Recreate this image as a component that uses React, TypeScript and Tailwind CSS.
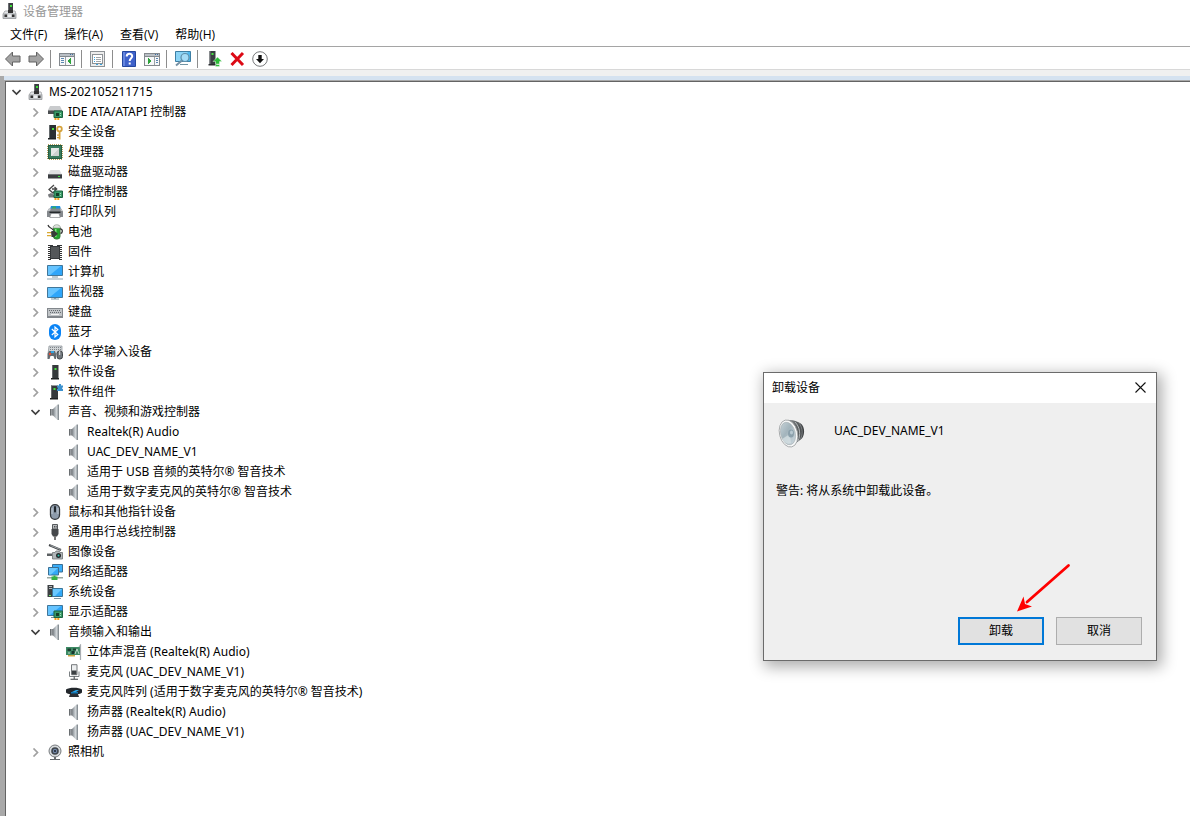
import { useState } from 'react';
import type { ReactElement, ReactNode } from 'react';

function Icon({ children, size = 16, crisp = false }: { children: ReactNode; size?: number; crisp?: boolean }) {
  return (
    <svg width={size} height={size} viewBox={`0 0 ${size} ${size}`} shapeRendering={crisp ? 'crispEdges' : 'auto'} fill="none" aria-hidden="true" className="shrink-0">
      {children}
    </svg>
  );
}

const Pc = (
  <Icon>
    <path d="M6 0h5v9H6z" fill="#3c3f42" />
    <path d="M6 0h1v9H6z" fill="#6a6d70" />
    <path d="M8 2h2v2H8z" fill="#3ee03a" />
    <path d="M3 8h10l1 3v4.500H1V11z" fill="#c3c6c9" stroke="#8b8e91" strokeWidth=".7" />
    <path d="M3 8.500h3V10H2.300zM11 8.500h2l.5 1.500H11z" fill="#e4e6e8" />
    <path d="M6 7h5v3H6z" fill="#333" />
    <path d="M2.500 11.500H5V14H2.500zM10 11.500h2.500V14H10z" fill="#333" />
    <path d="M6 11.500h3V14H6z" fill="#eef0f1" />
  </Icon>
);

const Card = (
  <>
    <path d="M7 7h8.500v6.500H7z" fill="#3a9a68" stroke="#1c6340" />
    <path d="M9 9h3v3H9z" fill="#16402a" />
    <path d="M13 9h1v1h-1zM13 11h1v1h-1z" fill="#9fe0b6" />
    <path d="M7.500 14H9.500v2h-2zM10.300 14h2v2h-2z" fill="#f2a21c" />
  </>
);

const Ide = (
  <Icon>
    <path d="M3 2h10l2 4H1z" fill="#c9cbcd" />
    <path d="M1 6h14v4H1z" fill="#4b4e51" />
    <path d="M1 6h14v1H1z" fill="#87898c" />
    {Card}
  </Icon>
);

const Security = (
  <Icon>
    <path d="M2 1h7v13.500H2z" fill="#2c3033" />
    <path d="M2 1h1v13.500H2z" fill="#63686b" />
    <path d="M5 4h2v2H5z" fill="#43e33c" />
    <path d="M1 14h8v1.500H1z" fill="#202325" />
    <circle cx="12.500" cy="5" r="2.300" stroke="#d5a23b" strokeWidth="1.800" />
    <path d="M11.700 7.500h1.800v8h-1.800zM10 10.500h2v1.200h-2zM10 13h2v1.200h-2z" fill="#d5a23b" />
  </Icon>
);

const Cpu = (
  <Icon crisp>
    <rect x="1" y="1" width="14" height="14" stroke="#b8a05a" strokeWidth="2" strokeDasharray="1 1" />
    <path d="M1 1h14v14H1z" fill="#245c43" />
    <path d="M2 2h12v12H2z" fill="#387a5c" />
    <path d="M4 4h8v8H4z" fill="#cdd2cf" />
    <path d="M4 12V4h8z" fill="#e4e7e5" />
  </Icon>
);

const Disk = (
  <Icon>
    <path d="M3.500 6h9l2.500 4.500H1z" fill="#dfe0e2" />
    <path d="M1 10.500h14v4H1z" fill="#3a3d40" />
    <path d="M1 10h14v1H1z" fill="#707376" />
    <path d="M11 12h2v1h-2z" fill="#3fe343" />
  </Icon>
);

const Storage = (
  <Icon>
    <path d="M7 1 2 5.500 6 9l1.500-1.500M5 5h4.500M7.500 3l2.200 2-2.200 2" stroke="#484848" strokeWidth="1.300" />
    <path d="M1 10.500 4 9l3 2H1zM1 11h6v2.500H2z" fill="#77797c" />
    {Card}
  </Icon>
);

const Printer = (
  <Icon>
    <path d="M4 2h9l1 3H3z" fill="#1b8fe0" />
    <path d="M5.500 2.500H9V5H5z" fill="#34ad61" />
    <path d="M2 4.500h12l2 3V13h-3l-1-3H4l-1 3H0V7.500z" fill="#85898d" />
    <path d="M2 4.500h2L3 7H.5zM14 4.500h-1L14 7h1.500z" fill="#c0c4c7" />
    <path d="M2.500 7.500h11V9h-11z" fill="#24282b" />
    <path d="M4 9.500h8l1.200 4H2.800z" fill="#fafafa" stroke="#73777a" strokeWidth=".6" />
  </Icon>
);

const Battery = (
  <Icon>
    <rect x="6.500" y="1.500" width="6.500" height="13.500" rx="2.500" fill="#24a52c" stroke="#387c39" />
    <path d="M6 4c0-4.500 7.500-4.500 7.500 0z" fill="#dbe1db" stroke="#8c948c" strokeWidth=".6" />
    <path d="M8 5h1.500v8H8z" fill="#85e283" />
    <path d="M13 5c3-.5 3 4 .5 4.500" stroke="#333" strokeWidth="1.300" />
    <path d="M1 1c1 4 4 2 5 5" stroke="#333" strokeWidth="1.200" />
    <path d="M4 7.500 7 6.500l4 3.300-3.500 3.200H4.500z" fill="#383d38" />
    <path d="M0 8h4v1.300H0zM0 11h4v1.300H0z" fill="#d9a831" />
  </Icon>
);

const Firmware = (
  <Icon crisp>
    <path d="M2.500 1v15M13.500 1v15" stroke="#333" strokeWidth="3" strokeDasharray="1 1" />
    <path d="M3 1h3v1h4V1h3v14H3z" fill="#35383b" />
    <path d="M4 3h8v11H4z" fill="#54575a" />
  </Icon>
);

const Screen = (
  <>
    <path d="M.5 1.500h15v10H.5z" fill="#2ea6fa" stroke="#41779a" />
    <path d="M1 2h13L3 11H1z" fill="#66c4ff" />
  </>
);
const Computer = (
  <Icon>
    {Screen}
    <path d="M5 12.500h6v1H5z" fill="#7b98a5" />
    <path d="M0 14.500h16v1H0z" fill="#8ba5b3" />
  </Icon>
);
const Monitor = (
  <Icon>
    <g transform="translate(0 2)">{Screen}</g>
    <path d="M7 14h2v1H7zM4 14.500h8v1H4z" fill="#829daa" />
  </Icon>
);
const Keyboard = (
  <Icon crisp>
    <path d="M0 4h16v10H0z" fill="#82878c" />
    <path d="M1 5h14v7H1z" fill="#c0c4c7" />
    <path d="M2 6.500h12M3 8.500h11" stroke="#666b70" strokeDasharray="1 1" />
    <path d="M4 10.500h8" stroke="#f4f4f4" />
  </Icon>
);
const Bluetooth = (
  <Icon>
    <rect x="2" y="0" width="12" height="16" rx="6" fill="#0a84f5" />
    <path d="m4.800 5 6 5.500L8 13V3l2.800 2.500L4.800 11" stroke="#fff" strokeWidth="1.200" />
  </Icon>
);
const Hid = (
  <Icon>
    <path d="M2 2h13v8H1z" fill="#d0d4d7" stroke="#8a9095" strokeWidth=".7" />
    <path d="M3 3.500h11M3 5.500h11" stroke="#7f8488" strokeDasharray="1 1" />
    <path d="M2 7h6l1 3v5H7.500l-1-3H3.500l-1 3H.5V10z" fill="#646b70" />
    <path d="M2 9h2v2H2z" fill="#e64b37" />
    <path d="M4 7h3v2H4z" fill="#35a1de" />
    <rect x="10" y="7" width="5.500" height="8" rx="2.500" fill="#71777c" stroke="#404549" />
    <path d="M12.700 7v4" stroke="#e1e4e6" />
  </Icon>
);
const Software = (
  <Icon>
    <path d="M5 1h6.500v14H5z" fill="#35393c" />
    <path d="M5 1h1v14H5z" fill="#65696c" />
    <path d="M7.500 4h2v2h-2z" fill="#48e33f" />
    <path d="M4 14h8v1.500H4z" fill="#1f2224" />
  </Icon>
);
const Component = (
  <Icon>
    <path d="M4 1.500h7v13H4z" fill="#35393c" />
    <path d="M4 1.500h1v13H4z" fill="#65696c" />
    <path d="M6.500 4h2v2h-2z" fill="#48e33f" />
    <path d="M3 14h8v1.500H3z" fill="#1f2224" />
    <path d="M10 1.500h2V0h2v1.500h2v2h-.8V5H16v2h-6V5h.8V3.500H10z" fill="#3c91ce" />
  </Icon>
);
const Speaker = (
  <Icon>
    <defs>
      <linearGradient id="cone">
        <stop stopColor="#6d7276" />
        <stop offset=".35" stopColor="#a9afb4" />
        <stop offset=".65" stopColor="#d3d8db" />
        <stop offset="1" stopColor="#737b81" />
      </linearGradient>
    </defs>
    <path d="M3 5h3v6.500H3z" fill="#9a9ea2" />
    <path d="M3 5h1v6.500H3z" fill="#6a6e71" />
    <path d="M5.500 5.500 10.500.5H12v15.500h-1.500l-5-5z" fill="url(#cone)" />
  </Icon>
);
const Mouse = (
  <Icon>
    <rect x="3.500" y=".7" width="9" height="14.600" rx="4.300" fill="#8d9bab" stroke="#34383c" strokeWidth="1.300" />
    <path d="M5 4v6M11 4v6" stroke="#c2ccd5" />
    <rect x="7" y="2" width="2" height="6.500" rx="1" fill="#20262c" />
  </Icon>
);
const Usb = (
  <Icon>
    <path d="M5.500.5h5V5h-5z" fill="#b9bdc0" stroke="#575a5d" />
    <path d="M7 2h.8v1.500H7zM8.700 2h.8v1.500h-.8z" fill="#333" />
    <path d="M4.500 5h7v5l-1.500 2.500H6L4.500 10z" fill="#45484b" />
    <path d="M7 12h2v4H7z" fill="#777" />
  </Icon>
);
const Imaging = (
  <Icon>
    <path d="m2 1 12 5" stroke="#3f4346" strokeWidth="2" />
    <path d="m3.500 1.500 10 4" stroke="#b7bdc0" strokeWidth=".8" />
    <path d="M0 9.500h5v2.500H0z" fill="#5c6063" />
    <path d="M5.500 8.500H8l1-1.500h3l1 1.500h2.500v6.500h-10z" fill="#b0b5b8" stroke="#6c7174" strokeWidth=".8" />
    <circle cx="11.500" cy="11.500" r="2.500" fill="#24292c" />
    <circle cx="11.500" cy="11.500" r="1" fill="#2fc5b0" />
  </Icon>
);
const Network = (
  <Icon>
    <path d="M5.500.5h10v7.500h-10z" fill="#3aaefa" stroke="#3a6f94" />
    <path d="M1.500 3.500h10v7.500h-10z" fill="#32a9f8" stroke="#3a6f94" />
    <path d="M2 4h9l-7 6.500H2z" fill="#6ac8ff" />
    <path d="M0 13h16v1.500H0z" fill="#9ba8a0" />
    <path d="M6.500 11.500h2v1h2V16h-6v-3.500h2z" fill="#36b046" />
  </Icon>
);
const System = (
  <Icon>
    <path d="M.5 1h6v12h-6z" fill="#3c4043" />
    <path d="M2 2.500h3M2 4.500h3" stroke="#b4b8bc" />
    <path d="M2 11h2v1H2z" fill="#6cf067" />
    <path d="M5.500 4.500h10v8h-10z" fill="#32a9f8" stroke="#3b7597" />
    <path d="M6 5h9l-7 7H6z" fill="#6ac8ff" />
    <path d="M7 14h7v1H7z" fill="#7c929e" />
  </Icon>
);
const Display = (
  <Icon>
    {Screen}
    <path d="M4 13h3v1H4z" fill="#7c929e" />
    {Card}
  </Icon>
);
const Mixer = (
  <Icon>
    <path d="M0 3h14v8H0z" fill="#3d8a64" />
    <path d="M1.500 4.500H5V7H1.500zM7 4.500h3v2H7z" fill="#1d3e31" />
    <path d="M5.500 7h3v3h-3z" fill="#15372c" />
    <path d="m9 10 2-5 2 5M2 9h2" stroke="#c8e1d4" strokeWidth=".9" />
    <path d="M2 11h7v1.500H2z" fill="#cda542" />
    <path d="m13 3 1.500-2v15" stroke="#a8adb1" strokeWidth="1.200" />
  </Icon>
);
const Mic = (
  <Icon>
    <path d="M5.500.7h5.500v10H5.500z" fill="#eceeef" stroke="#74787b" />
    <path d="M6 6.500h4.500V10.500H6z" fill="#3c4043" />
    <path d="M3.500 7.500v5H13v-5" stroke="#7b8083" />
    <path d="M7.700 12.500h1V15h-1zM4.500 14.800h7.500v1H4.500z" fill="#3e4245" />
  </Icon>
);
const MicArray = (
  <Icon>
    <path d="M0 5.500C3 3 13 3 16 5.500v3c-1 1.500-3 1.500-4 1.500H4c-1 0-3 0-4-1.500z" fill="#22272c" />
    <path d="M4 10h8l1 3H3z" fill="#2c3034" />
    <path d="m6 8 4-2h3l-3 2z" fill="#2aa7eb" />
    <path d="M5 8h7v1.500H5z" fill="#1578b5" />
  </Icon>
);
const Camera = (
  <Icon>
    <circle cx="8" cy="7" r="6" fill="#d7dadc" stroke="#777b7e" />
    <circle cx="8" cy="7" r="3.800" fill="#3e444b" />
    <circle cx="8" cy="7" r="2.200" fill="#7488a7" />
    <circle cx="8" cy="7" r="1" fill="#18202c" />
    <path d="M7 13h2v2H7zM3 15h10v1H3z" fill="#666a6d" />
  </Icon>
);

type Device = { name: string; icon: ReactElement; children?: Device[] };

const leaf = (name: string, icon: ReactElement): Device => ({ name, icon });
const group = (name: string, icon: ReactElement, children: Device[] = []): Device => ({ name, icon, children });

const devices: Device[] = [
  group('IDE ATA/ATAPI 控制器', Ide),
  group('安全设备', Security),
  group('处理器', Cpu),
  group('磁盘驱动器', Disk),
  group('存储控制器', Storage),
  group('打印队列', Printer),
  group('电池', Battery),
  group('固件', Firmware),
  group('计算机', Computer),
  group('监视器', Monitor),
  group('键盘', Keyboard),
  group('蓝牙', Bluetooth),
  group('人体学输入设备', Hid),
  group('软件设备', Software),
  group('软件组件', Component),
  group('声音、视频和游戏控制器', Speaker, [
    leaf('Realtek(R) Audio', Speaker),
    leaf('UAC_DEV_NAME_V1', Speaker),
    leaf('适用于 USB 音频的英特尔® 智音技术', Speaker),
    leaf('适用于数字麦克风的英特尔® 智音技术', Speaker),
  ]),
  group('鼠标和其他指针设备', Mouse),
  group('通用串行总线控制器', Usb),
  group('图像设备', Imaging),
  group('网络适配器', Network),
  group('系统设备', System),
  group('显示适配器', Display),
  group('音频输入和输出', Speaker, [
    leaf('立体声混音 (Realtek(R) Audio)', Mixer),
    leaf('麦克风 (UAC_DEV_NAME_V1)', Mic),
    leaf('麦克风阵列 (适用于数字麦克风的英特尔® 智音技术)', MicArray),
    leaf('扬声器 (Realtek(R) Audio)', Speaker),
    leaf('扬声器 (UAC_DEV_NAME_V1)', Speaker),
  ]),
  group('照相机', Camera),
];

function TreeNode({ device }: { device: Device }) {
  const children = device.children;
  const [open, setOpen] = useState(!!children && children.length > 0);
  return (
    <li role="treeitem" aria-expanded={children ? open : undefined}>
      <div className="flex h-5 items-center whitespace-nowrap">
        {children ? (
          <button type="button" aria-label={device.name} onClick={() => setOpen(!open)} className="flex h-5 w-[19px] items-center justify-center">
            <svg width="9" height="9" viewBox="0 0 9 9" fill="none" strokeWidth="1.700" aria-hidden="true">
              {open ? <path d="M.5 2 4.500 6l4-4" stroke="#404040" /> : <path d="M2.500.5l4 4-4 4" stroke="#a0a0a0" />}
            </svg>
          </button>
        ) : (
          <span className="w-[19px]" />
        )}
        <span className="ml-0.5 mr-[5px]">{device.icon}</span>
        <span>{device.name}</span>
      </div>
      {open && children && (
        <ul role="group" className="pl-[19px]">
          {children.map((child) => (
            <TreeNode key={child.name} device={child} />
          ))}
        </ul>
      )}
    </li>
  );
}

const ArrowShape = <path d="M.5 8 7.500 1V5H15v6H7.500v4z" fill="#a3a3a3" stroke="#636363" />;

const WindowFrame = (
  <>
    <path d="M.5 2.500h15v12H.5z" fill="#f7f8f9" stroke="#84898e" />
    <path d="M1 3h14v2H1z" fill="#b9bfc5" />
    <path d="M11 3h1v1h-1zM13 3h1v1h-1z" fill="#3c6ea3" />
    <path d="M1 5.500h14" stroke="#84898e" />
  </>
);

const toolbar: { label: string; icon: ReactElement }[][] = [
  [
    { label: '后退', icon: <Icon>{ArrowShape}</Icon> },
    { label: '前进', icon: <Icon><g transform="matrix(-1 0 0 1 16 0)">{ArrowShape}</g></Icon> },
  ],
  [
    {
      label: '显示/隐藏控制台树',
      icon: (
        <Icon crisp>
          {WindowFrame}
          <path d="M6 6h1v8H6z" fill="#9ca2a7" />
          <path d="M2 7h3v1H2zM2 9h3v1H2zM2 11h3v1H2z" fill="#5c87b2" />
          <path d="M12 7v6L8 10z" fill="#2da33a" />
        </Icon>
      ),
    },
  ],
  [
    {
      label: '属性',
      icon: (
        <Icon crisp>
          <path d="M.5.5h14v15H.5z" fill="#ececec" stroke="#8d9296" />
          <path d="M2.500 3.500h10v9h-10z" fill="#fff" stroke="#8d9296" />
          <path d="M3 2.500h4v1H3z" fill="#8d9296" />
          <path d="M4 6h1v1H4zM4 8h1v1H4zM4 10h1v1H4z" fill="#38a4df" />
          <path d="M6 6h5v1H6zM6 8h5v1H6zM6 10h5v1H6z" fill="#a0a5a9" />
          <path d="M6 13h2v1H6zM10 13h2v1h-2z" fill="#38a4df" />
        </Icon>
      ),
    },
  ],
  [
    {
      label: '帮助',
      icon: (
        <Icon>
          <path d="M1.500.5h13v15h-13z" fill="#3f62ca" stroke="#24479f" />
          <path d="M2 1h2v14H2z" fill="#6485de" />
          <path d="M5.700 5.500c0-3.500 5.500-3.500 5.500-.3 0 2-2.500 2.200-2.500 4.800" stroke="#fff" strokeWidth="2" />
          <path d="M7.700 11.500h2v2h-2z" fill="#fff" />
        </Icon>
      ),
    },
    {
      label: '显示操作窗格',
      icon: (
        <Icon crisp>
          {WindowFrame}
          <path d="M10 6h1v8h-1z" fill="#9ca2a7" />
          <path d="M12 7h2v1h-2zM12 9h2v1h-2zM12 11h2v1h-2z" fill="#5c87b2" />
          <path d="M4 7v6l4-3z" fill="#2da33a" />
        </Icon>
      ),
    },
  ],
  [
    {
      label: '扫描检测硬件改动',
      icon: (
        <Icon size={18}>
          <path d="M1.500 1.500h15v10h-15z" fill="#50b8ee" stroke="#3d7fa5" />
          <path d="M2 2h12L6 11H2z" fill="#8bd4f6" />
          <path d="M6 14h8v1H6z" fill="#7194a5" />
          <path d="m8 10.500-6 5" stroke="#7590a4" strokeWidth="2" />
          <circle cx="11" cy="7.500" r="4" fill="#a5dcf7" stroke="#5f8eaa" strokeWidth="1.200" />
        </Icon>
      ),
    },
  ],
  [
    {
      label: '更新驱动程序',
      icon: (
        <Icon>
          <path d="M3.500 0h6v14h-6z" fill="#3a3e41" />
          <path d="M3.500 0h1v14h-1z" fill="#777b7e" />
          <path d="M5.500 2h2v2h-2z" fill="#49e343" />
          <path d="M2.500 13h8v1.500h-8z" fill="#2a2d30" />
          <path d="m11.500 6 4.500 4.500h-2.500V13h-4v-2.500H7zM9.500 13.500h4v2h-4z" fill="#2ebc39" stroke="#fff" strokeWidth=".4" />
        </Icon>
      ),
    },
    { label: '卸载设备', icon: <Icon><path d="m2.500 2 11.500 12M14 2 2.500 14" stroke="#dc0a15" strokeWidth="3" /></Icon> },
    {
      label: '禁用设备',
      icon: (
        <Icon>
          <circle cx="8" cy="8" r="7.300" fill="#fff" stroke="#77797b" />
          <path d="M6.300 4h3.400v4H12l-4 4.300L4 8h2.300z" fill="#111" />
        </Icon>
      ),
    },
  ],
];

const uiFont = "font-['Noto_Sans','Noto_Sans_CJK_SC',sans-serif]";
const menuFont = "font-['Open_Sans','Noto_Sans_CJK_SC',sans-serif]";

function UninstallDialog() {
  return (
    <section role="dialog" aria-labelledby="dialog-title" className="absolute top-[372px] right-[33px] w-[394px] border border-[#6b6b6b] bg-[#efefef] shadow-[3px_4px_14px_2px_rgba(0,0,0,0.32)]">
      <header className="flex h-[30px] items-center justify-between bg-white pl-2">
        <h2 id="dialog-title">卸载设备</h2>
        <button type="button" aria-label="关闭" className="flex h-7 w-8 items-center justify-center pb-px">
          <svg width="11" height="11" viewBox="0 0 11 11" stroke="#111" strokeWidth="1.100" aria-hidden="true">
            <path d="m.5.5 10 10M10.500.5l-10 10" />
          </svg>
        </button>
      </header>
      <div className="px-3 pt-3 pb-[15px]">
        <div className="flex h-9 items-center">
          <svg width="32" height="32" viewBox="0 0 32 32" fill="none" aria-hidden="true" className="shrink-0">
            <defs>
              <linearGradient id="membrane" x1="0" y1="0" x2=".6" y2="1">
                <stop stopColor="#c9d5da" />
                <stop offset=".5" stopColor="#a3b4bc" />
                <stop offset="1" stopColor="#c4d1d8" />
              </linearGradient>
              <linearGradient id="magnet">
                <stop stopColor="#909496" />
                <stop offset=".6" stopColor="#5d6163" />
                <stop offset="1" stopColor="#3b3e40" />
              </linearGradient>
            </defs>
            <path d="M12 3c5-.5 9 1 12 3 6 3 5 15 0 17l-8 6z" fill="url(#magnet)" />
            <path d="M19 5c5 5 6 13 3 19" stroke="#b0b4b6" strokeWidth="1" />
            <path d="M23 6c4 5 4 12 1 17" stroke="#888c8e" strokeWidth=".8" />
            <ellipse cx="12.500" cy="16.500" rx="9" ry="13.800" transform="rotate(-14 12.500 16.500)" fill="#f8f9f9" stroke="#9ca0a2" strokeWidth=".8" />
            <ellipse cx="12" cy="16.500" rx="7.300" ry="11.500" transform="rotate(-14 12 16.500)" fill="url(#membrane)" stroke="#a8afb2" strokeWidth=".6" />
            <path d="m6 22 8-5 1 9c-4 2-7-.5-9-4z" fill="#d9e2e6" opacity=".7" />
            <ellipse cx="15" cy="16.500" rx="3" ry="4" fill="#8ba0ab" />
            <ellipse cx="15.500" cy="15.500" rx="1.500" ry="2" fill="#b9c9d2" />
          </svg>
          <span className="ml-[26px] pb-1">UAC_DEV_NAME_V1</span>
        </div>
        <p className="mt-[30px] h-5 leading-5">警告: 将从系统中卸载此设备。</p>
        <div className="mt-[116px] flex justify-end gap-3 pr-0.5">
          <button type="button" className="h-7 w-[86px] border-2 border-[#0078d7] bg-[#e1e1e1] pb-px">卸载</button>
          <button type="button" className="h-7 w-[86px] border border-[#adadad] bg-[#e1e1e1] pb-px">取消</button>
        </div>
      </div>
      <svg width="56" height="50" viewBox="0 0 56 50" aria-hidden="true" className="pointer-events-none absolute right-[85px] bottom-[47px]">
        <path d="M53.500 2.500 12 39" stroke="#f00" strokeWidth="2.800" strokeLinecap="round" />
        <path d="m2 48.500 6.500-15 1.500 7.500 7 2.500z" fill="#f00" />
      </svg>
    </section>
  );
}

export default function App() {
  return (
    <main className={`relative flex min-h-screen flex-col overflow-hidden bg-white text-xs text-black ${uiFont}`}>
      <header className="flex h-[22px] items-center gap-1 pl-0.5 text-[#999]">
        {Pc}
        <h1 className="pt-0.5 pl-px">设备管理器</h1>
      </header>
      <nav className={`flex h-[25px] items-center gap-[17px] border-b border-[#a5a5a5] pt-0.5 pl-2.5 ${menuFont}`}>
        <button type="button">文件(F)</button>
        <button type="button">操作(A)</button>
        <button type="button">查看(V)</button>
        <button type="button">帮助(H)</button>
      </nav>
      <div role="toolbar" className="flex h-[23px] items-center border-b border-[#d8d8d8] pt-0.5 pl-px">
        {toolbar.map((items, i) => (
          <div key={items[0].label} className="flex items-center">
            {i > 0 && <span className="mr-1 ml-[3px] h-[18px] w-px bg-[#8d8d8d]" />}
            {items.map((item) => (
              <button key={item.label} type="button" aria-label={item.label} className="flex h-[22px] w-[23px] items-center justify-center">
                {item.icon}
              </button>
            ))}
          </div>
        ))}
      </div>
      <div className="h-1.5 bg-[#f0f0f0]" />
      <div className="flex grow border-l-4 border-[#a9a9a9] bg-[#d5e2f0] pt-1">
        <div className="flex grow border-t border-l border-[#a9a9a9]">
          <ul role="tree" className="grow border-t border-l border-[#646464] bg-white pl-px">
            <TreeNode device={group('MS-202105211715', Pc, devices)} />
          </ul>
        </div>
      </div>
      <UninstallDialog />
    </main>
  );
}
